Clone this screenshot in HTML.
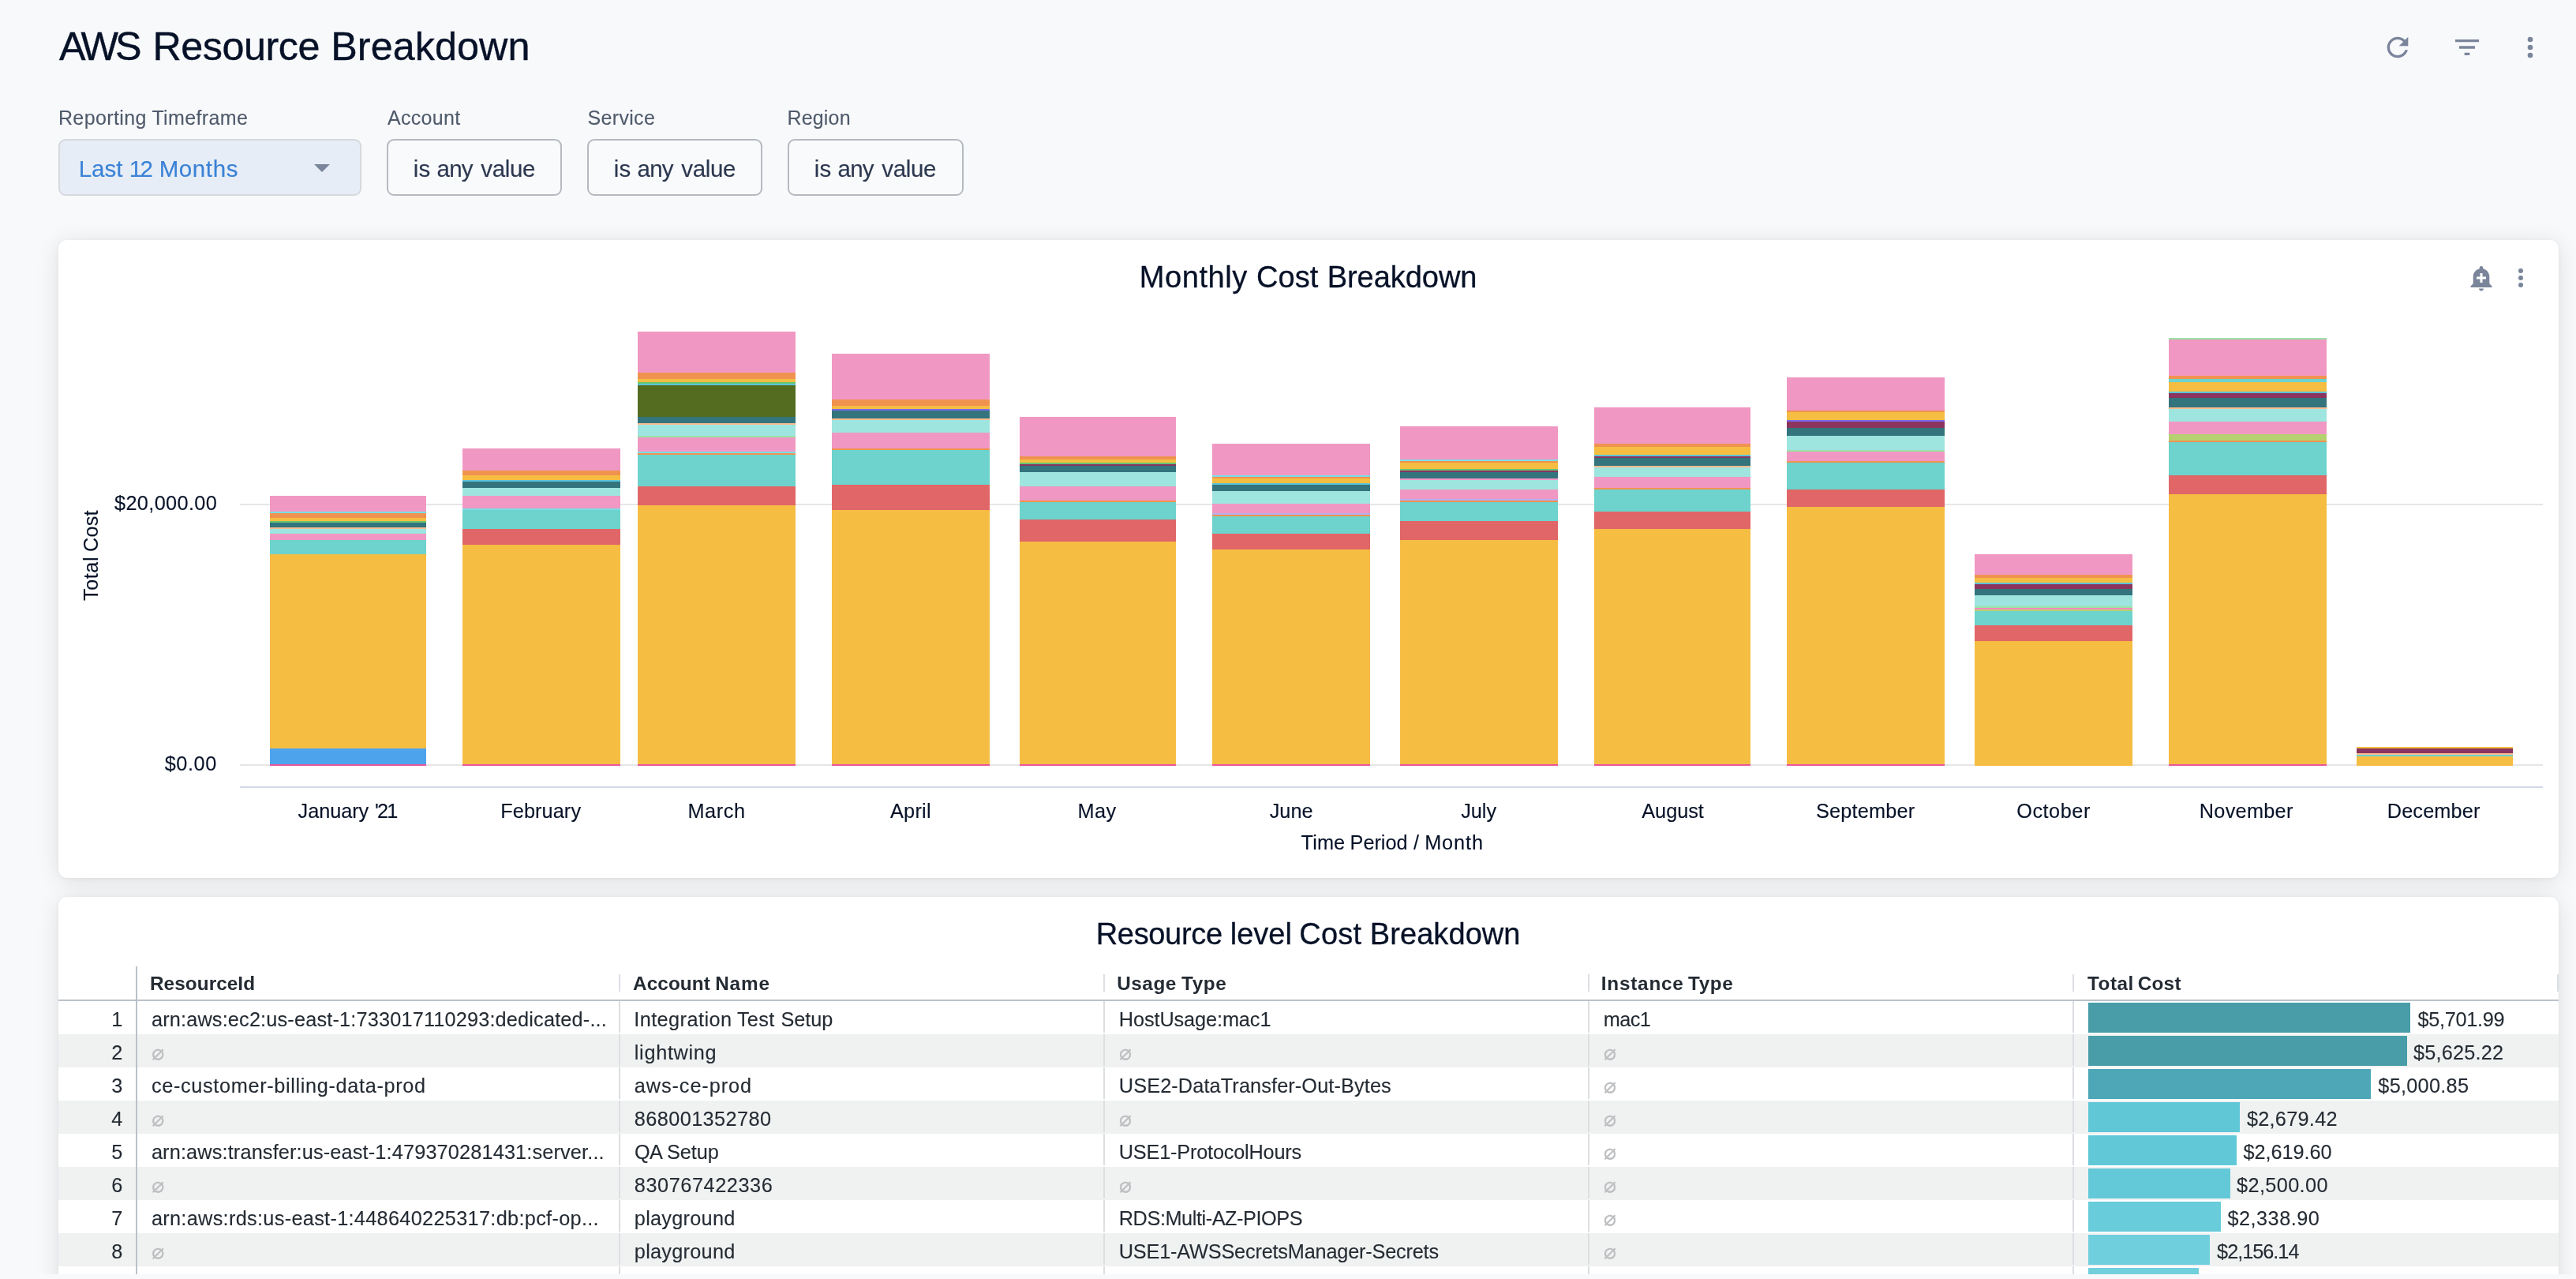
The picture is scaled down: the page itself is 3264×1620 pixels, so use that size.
<!DOCTYPE html>
<html lang="en"><head><meta charset="utf-8"><title>AWS Resource Breakdown</title>
<style>
html,body{margin:0;padding:0;background:#f8f9fb;}
body{width:3264px;height:1620px;overflow:hidden;position:relative;font-family:"Liberation Sans", sans-serif;}
#page{position:absolute;left:0;top:0;width:3264px;height:1614px;overflow:hidden;background:#f8f9fb;}
.abs{position:absolute;}
.t{position:absolute;white-space:nowrap;font-kerning:normal;}
.card{position:absolute;left:74px;width:3168px;background:#fff;border-radius:11px;box-shadow:0 1px 5px rgba(0,0,0,0.05), 0 4px 30px rgba(0,0,0,0.105);}
.dd{position:absolute;left:74px;top:176px;width:384px;height:72px;box-sizing:border-box;border:2px solid #d6d9dd;border-radius:9px;background:#e6edf6;}
.btn{position:absolute;top:176px;width:222px;height:72px;box-sizing:border-box;border:2px solid #b5b9c0;border-radius:9px;background:#f9fafb;}
</style></head><body><div id="page">
<div class="card" style="top:304px;height:808px"></div>
<div class="card" style="top:1136px;height:560px"></div>
<div class="dd"></div>
<div class="btn" style="left:490px"></div>
<div class="btn" style="left:744px"></div>
<div class="btn" style="left:998px;width:223px"></div>
<svg class="abs" style="left:0;top:0" width="3264" height="1130" viewBox="0 0 3264 1130" shape-rendering="crispEdges">
<rect x="304" y="638" width="2918" height="2" fill="#e6e6e6"/>
<rect x="304" y="968" width="2918" height="2" fill="#e6e6e6"/>
<rect x="304" y="996" width="2918" height="2" fill="#d2d9ea"/>
<rect x="342" y="628" width="198" height="20" fill="#f098c3"/>
<rect x="342" y="648" width="198" height="2" fill="#7cdde6"/>
<rect x="342" y="650" width="198" height="6" fill="#f0934f"/>
<rect x="342" y="656" width="198" height="4" fill="#f5bd42"/>
<rect x="342" y="660" width="198" height="2" fill="#66c671"/>
<rect x="342" y="662" width="198" height="6" fill="#33747d"/>
<rect x="342" y="668" width="198" height="2" fill="#f9bb8e"/>
<rect x="342" y="670" width="198" height="6" fill="#9ee5df"/>
<rect x="342" y="676" width="198" height="8" fill="#f098c3"/>
<rect x="342" y="684" width="198" height="18" fill="#6dd3cc"/>
<rect x="342" y="702" width="198" height="246" fill="#f5bd42"/>
<rect x="342" y="948" width="198" height="20" fill="#4ea4ec"/>
<rect x="342" y="968" width="198" height="2" fill="#ea559d"/>
<rect x="586" y="568" width="200" height="28" fill="#f098c3"/>
<rect x="586" y="596" width="200" height="6" fill="#f0934f"/>
<rect x="586" y="602" width="200" height="6" fill="#f5bd42"/>
<rect x="586" y="608" width="200" height="2" fill="#5bc4d9"/>
<rect x="586" y="610" width="200" height="8" fill="#33747d"/>
<rect x="586" y="618" width="200" height="10" fill="#9ee5df"/>
<rect x="586" y="628" width="200" height="16" fill="#f098c3"/>
<rect x="586" y="644" width="200" height="2" fill="#7cdde6"/>
<rect x="586" y="646" width="200" height="24" fill="#6dd3cc"/>
<rect x="586" y="670" width="200" height="20" fill="#e16667"/>
<rect x="586" y="690" width="200" height="278" fill="#f5bd42"/>
<rect x="586" y="968" width="200" height="2" fill="#ea559d"/>
<rect x="808" y="420" width="200" height="52" fill="#f098c3"/>
<rect x="808" y="472" width="200" height="8" fill="#f0934f"/>
<rect x="808" y="480" width="200" height="4" fill="#f5bd42"/>
<rect x="808" y="484" width="200" height="2" fill="#66c671"/>
<rect x="808" y="486" width="200" height="2" fill="#5bc4d9"/>
<rect x="808" y="488" width="200" height="40" fill="#546c1f"/>
<rect x="808" y="528" width="200" height="8" fill="#33747d"/>
<rect x="808" y="536" width="200" height="2" fill="#f9bb8e"/>
<rect x="808" y="538" width="200" height="14" fill="#9ee5df"/>
<rect x="808" y="552" width="200" height="2" fill="#9ae2a6"/>
<rect x="808" y="554" width="200" height="18" fill="#f098c3"/>
<rect x="808" y="572" width="200" height="2" fill="#7cdde6"/>
<rect x="808" y="574" width="200" height="2" fill="#f0934f"/>
<rect x="808" y="576" width="200" height="40" fill="#6dd3cc"/>
<rect x="808" y="616" width="200" height="24" fill="#e16667"/>
<rect x="808" y="640" width="200" height="328" fill="#f5bd42"/>
<rect x="808" y="968" width="200" height="2" fill="#ea559d"/>
<rect x="1054" y="448" width="200" height="58" fill="#f098c3"/>
<rect x="1054" y="506" width="200" height="8" fill="#f0934f"/>
<rect x="1054" y="514" width="200" height="4" fill="#f5bd42"/>
<rect x="1054" y="518" width="200" height="2" fill="#7b6aeb"/>
<rect x="1054" y="520" width="200" height="10" fill="#33747d"/>
<rect x="1054" y="530" width="200" height="2" fill="#f9bb8e"/>
<rect x="1054" y="532" width="200" height="16" fill="#9ee5df"/>
<rect x="1054" y="548" width="200" height="20" fill="#f098c3"/>
<rect x="1054" y="568" width="200" height="2" fill="#f0934f"/>
<rect x="1054" y="570" width="200" height="44" fill="#6dd3cc"/>
<rect x="1054" y="614" width="200" height="32" fill="#e16667"/>
<rect x="1054" y="646" width="200" height="322" fill="#f5bd42"/>
<rect x="1054" y="968" width="200" height="2" fill="#ea559d"/>
<rect x="1292" y="528" width="198" height="50" fill="#f098c3"/>
<rect x="1292" y="578" width="198" height="4" fill="#f0934f"/>
<rect x="1292" y="582" width="198" height="4" fill="#f5bd42"/>
<rect x="1292" y="586" width="198" height="2" fill="#66c671"/>
<rect x="1292" y="588" width="198" height="2" fill="#8a345e"/>
<rect x="1292" y="590" width="198" height="8" fill="#33747d"/>
<rect x="1292" y="598" width="198" height="18" fill="#9ee5df"/>
<rect x="1292" y="616" width="198" height="18" fill="#f098c3"/>
<rect x="1292" y="634" width="198" height="2" fill="#f0934f"/>
<rect x="1292" y="636" width="198" height="22" fill="#6dd3cc"/>
<rect x="1292" y="658" width="198" height="28" fill="#e16667"/>
<rect x="1292" y="686" width="198" height="282" fill="#f5bd42"/>
<rect x="1292" y="968" width="198" height="2" fill="#ea559d"/>
<rect x="1536" y="562" width="200" height="40" fill="#f098c3"/>
<rect x="1536" y="602" width="200" height="2" fill="#7cdde6"/>
<rect x="1536" y="604" width="200" height="2" fill="#f0934f"/>
<rect x="1536" y="606" width="200" height="6" fill="#f5bd42"/>
<rect x="1536" y="612" width="200" height="2" fill="#5bc4d9"/>
<rect x="1536" y="614" width="200" height="8" fill="#33747d"/>
<rect x="1536" y="622" width="200" height="16" fill="#9ee5df"/>
<rect x="1536" y="638" width="200" height="12" fill="#f098c3"/>
<rect x="1536" y="650" width="200" height="2" fill="#b3aef5"/>
<rect x="1536" y="652" width="200" height="2" fill="#f0934f"/>
<rect x="1536" y="654" width="200" height="22" fill="#6dd3cc"/>
<rect x="1536" y="676" width="200" height="20" fill="#e16667"/>
<rect x="1536" y="696" width="200" height="272" fill="#f5bd42"/>
<rect x="1536" y="968" width="200" height="2" fill="#ea559d"/>
<rect x="1774" y="540" width="200" height="42" fill="#f098c3"/>
<rect x="1774" y="582" width="200" height="2" fill="#7cdde6"/>
<rect x="1774" y="584" width="200" height="2" fill="#f0934f"/>
<rect x="1774" y="586" width="200" height="8" fill="#f5bd42"/>
<rect x="1774" y="594" width="200" height="2" fill="#66c671"/>
<rect x="1774" y="596" width="200" height="2" fill="#8a345e"/>
<rect x="1774" y="598" width="200" height="8" fill="#33747d"/>
<rect x="1774" y="606" width="200" height="2" fill="#f098c3"/>
<rect x="1774" y="608" width="200" height="12" fill="#9ee5df"/>
<rect x="1774" y="620" width="200" height="12" fill="#f098c3"/>
<rect x="1774" y="632" width="200" height="2" fill="#b3aef5"/>
<rect x="1774" y="634" width="200" height="2" fill="#f0934f"/>
<rect x="1774" y="636" width="200" height="24" fill="#6dd3cc"/>
<rect x="1774" y="660" width="200" height="24" fill="#e16667"/>
<rect x="1774" y="684" width="200" height="284" fill="#f5bd42"/>
<rect x="1774" y="968" width="200" height="2" fill="#ea559d"/>
<rect x="2020" y="516" width="198" height="46" fill="#f098c3"/>
<rect x="2020" y="562" width="198" height="4" fill="#f0934f"/>
<rect x="2020" y="566" width="198" height="10" fill="#f5bd42"/>
<rect x="2020" y="576" width="198" height="2" fill="#5bc4d9"/>
<rect x="2020" y="578" width="198" height="2" fill="#8a345e"/>
<rect x="2020" y="580" width="198" height="10" fill="#33747d"/>
<rect x="2020" y="590" width="198" height="2" fill="#f9bb8e"/>
<rect x="2020" y="592" width="198" height="12" fill="#9ee5df"/>
<rect x="2020" y="604" width="198" height="14" fill="#f098c3"/>
<rect x="2020" y="618" width="198" height="2" fill="#f0934f"/>
<rect x="2020" y="620" width="198" height="28" fill="#6dd3cc"/>
<rect x="2020" y="648" width="198" height="22" fill="#e16667"/>
<rect x="2020" y="670" width="198" height="298" fill="#f5bd42"/>
<rect x="2020" y="968" width="198" height="2" fill="#ea559d"/>
<rect x="2264" y="478" width="200" height="42" fill="#f098c3"/>
<rect x="2264" y="520" width="200" height="2" fill="#f0934f"/>
<rect x="2264" y="522" width="200" height="10" fill="#f5bd42"/>
<rect x="2264" y="532" width="200" height="2" fill="#7b6aeb"/>
<rect x="2264" y="534" width="200" height="8" fill="#8a345e"/>
<rect x="2264" y="542" width="200" height="10" fill="#33747d"/>
<rect x="2264" y="552" width="200" height="18" fill="#9ee5df"/>
<rect x="2264" y="570" width="200" height="2" fill="#9ae2a6"/>
<rect x="2264" y="572" width="200" height="12" fill="#f098c3"/>
<rect x="2264" y="584" width="200" height="2" fill="#f0934f"/>
<rect x="2264" y="586" width="200" height="34" fill="#6dd3cc"/>
<rect x="2264" y="620" width="200" height="22" fill="#e16667"/>
<rect x="2264" y="642" width="200" height="326" fill="#f5bd42"/>
<rect x="2264" y="968" width="200" height="2" fill="#ea559d"/>
<rect x="2502" y="702" width="200" height="26" fill="#f098c3"/>
<rect x="2502" y="728" width="200" height="4" fill="#f0934f"/>
<rect x="2502" y="732" width="200" height="6" fill="#f5bd42"/>
<rect x="2502" y="738" width="200" height="2" fill="#5bc4d9"/>
<rect x="2502" y="740" width="200" height="6" fill="#8a345e"/>
<rect x="2502" y="746" width="200" height="8" fill="#33747d"/>
<rect x="2502" y="754" width="200" height="14" fill="#9ee5df"/>
<rect x="2502" y="768" width="200" height="2" fill="#9ae2a6"/>
<rect x="2502" y="770" width="200" height="2" fill="#f08cc0"/>
<rect x="2502" y="772" width="200" height="2" fill="#b6d170"/>
<rect x="2502" y="774" width="200" height="18" fill="#6dd3cc"/>
<rect x="2502" y="792" width="200" height="20" fill="#e16667"/>
<rect x="2502" y="812" width="200" height="158" fill="#f5bd42"/>
<rect x="2748" y="428" width="200" height="2" fill="#9ae2a6"/>
<rect x="2748" y="430" width="200" height="46" fill="#f098c3"/>
<rect x="2748" y="476" width="200" height="4" fill="#f0934f"/>
<rect x="2748" y="480" width="200" height="4" fill="#6dd3cc"/>
<rect x="2748" y="484" width="200" height="12" fill="#f5bd42"/>
<rect x="2748" y="496" width="200" height="2" fill="#5bc4d9"/>
<rect x="2748" y="498" width="200" height="6" fill="#8a345e"/>
<rect x="2748" y="504" width="200" height="12" fill="#33747d"/>
<rect x="2748" y="516" width="200" height="2" fill="#f9bb8e"/>
<rect x="2748" y="518" width="200" height="16" fill="#9ee5df"/>
<rect x="2748" y="534" width="200" height="16" fill="#f098c3"/>
<rect x="2748" y="550" width="200" height="8" fill="#b6d170"/>
<rect x="2748" y="558" width="200" height="2" fill="#f0934f"/>
<rect x="2748" y="560" width="200" height="42" fill="#6dd3cc"/>
<rect x="2748" y="602" width="200" height="24" fill="#e16667"/>
<rect x="2748" y="626" width="200" height="342" fill="#f5bd42"/>
<rect x="2748" y="968" width="200" height="2" fill="#ea559d"/>
<rect x="2986" y="946" width="198" height="2" fill="#f5bd42"/>
<rect x="2986" y="948" width="198" height="6" fill="#8a345e"/>
<rect x="2986" y="954" width="198" height="2" fill="#f9bb8e"/>
<rect x="2986" y="956" width="198" height="2" fill="#6dd3cc"/>
<rect x="2986" y="958" width="198" height="12" fill="#f5bd42"/>
</svg>
<div class="abs" style="left:74px;top:1310px;width:3168px;height:42px;background:#f0f2f2"></div>
<div class="abs" style="left:74px;top:1394px;width:3168px;height:42px;background:#f0f2f2"></div>
<div class="abs" style="left:74px;top:1478px;width:3168px;height:42px;background:#f0f2f2"></div>
<div class="abs" style="left:74px;top:1562px;width:3168px;height:42px;background:#f0f2f2"></div>
<div class="abs" style="left:74px;top:1266px;width:3168px;height:2px;background:#bcc2c9"></div>
<div class="abs" style="left:172px;top:1224px;width:2px;height:400px;background:#bbc1c9"></div>
<div class="abs" style="left:784px;top:1234px;width:2px;height:22px;background:#dcdfe3"></div>
<div class="abs" style="left:784px;top:1268px;width:2px;height:40px;background:#dcdee2"></div>
<div class="abs" style="left:784px;top:1310px;width:2px;height:40px;background:#dcdee2"></div>
<div class="abs" style="left:784px;top:1352px;width:2px;height:40px;background:#dcdee2"></div>
<div class="abs" style="left:784px;top:1394px;width:2px;height:40px;background:#dcdee2"></div>
<div class="abs" style="left:784px;top:1436px;width:2px;height:40px;background:#dcdee2"></div>
<div class="abs" style="left:784px;top:1478px;width:2px;height:40px;background:#dcdee2"></div>
<div class="abs" style="left:784px;top:1520px;width:2px;height:40px;background:#dcdee2"></div>
<div class="abs" style="left:784px;top:1562px;width:2px;height:40px;background:#dcdee2"></div>
<div class="abs" style="left:784px;top:1604px;width:2px;height:40px;background:#dcdee2"></div>
<div class="abs" style="left:1398px;top:1234px;width:2px;height:22px;background:#dcdfe3"></div>
<div class="abs" style="left:1398px;top:1268px;width:2px;height:40px;background:#dcdee2"></div>
<div class="abs" style="left:1398px;top:1310px;width:2px;height:40px;background:#dcdee2"></div>
<div class="abs" style="left:1398px;top:1352px;width:2px;height:40px;background:#dcdee2"></div>
<div class="abs" style="left:1398px;top:1394px;width:2px;height:40px;background:#dcdee2"></div>
<div class="abs" style="left:1398px;top:1436px;width:2px;height:40px;background:#dcdee2"></div>
<div class="abs" style="left:1398px;top:1478px;width:2px;height:40px;background:#dcdee2"></div>
<div class="abs" style="left:1398px;top:1520px;width:2px;height:40px;background:#dcdee2"></div>
<div class="abs" style="left:1398px;top:1562px;width:2px;height:40px;background:#dcdee2"></div>
<div class="abs" style="left:1398px;top:1604px;width:2px;height:40px;background:#dcdee2"></div>
<div class="abs" style="left:2012px;top:1234px;width:2px;height:22px;background:#dcdfe3"></div>
<div class="abs" style="left:2012px;top:1268px;width:2px;height:40px;background:#dcdee2"></div>
<div class="abs" style="left:2012px;top:1310px;width:2px;height:40px;background:#dcdee2"></div>
<div class="abs" style="left:2012px;top:1352px;width:2px;height:40px;background:#dcdee2"></div>
<div class="abs" style="left:2012px;top:1394px;width:2px;height:40px;background:#dcdee2"></div>
<div class="abs" style="left:2012px;top:1436px;width:2px;height:40px;background:#dcdee2"></div>
<div class="abs" style="left:2012px;top:1478px;width:2px;height:40px;background:#dcdee2"></div>
<div class="abs" style="left:2012px;top:1520px;width:2px;height:40px;background:#dcdee2"></div>
<div class="abs" style="left:2012px;top:1562px;width:2px;height:40px;background:#dcdee2"></div>
<div class="abs" style="left:2012px;top:1604px;width:2px;height:40px;background:#dcdee2"></div>
<div class="abs" style="left:2626px;top:1234px;width:2px;height:22px;background:#dcdfe3"></div>
<div class="abs" style="left:2626px;top:1268px;width:2px;height:40px;background:#dcdee2"></div>
<div class="abs" style="left:2626px;top:1310px;width:2px;height:40px;background:#dcdee2"></div>
<div class="abs" style="left:2626px;top:1352px;width:2px;height:40px;background:#dcdee2"></div>
<div class="abs" style="left:2626px;top:1394px;width:2px;height:40px;background:#dcdee2"></div>
<div class="abs" style="left:2626px;top:1436px;width:2px;height:40px;background:#dcdee2"></div>
<div class="abs" style="left:2626px;top:1478px;width:2px;height:40px;background:#dcdee2"></div>
<div class="abs" style="left:2626px;top:1520px;width:2px;height:40px;background:#dcdee2"></div>
<div class="abs" style="left:2626px;top:1562px;width:2px;height:40px;background:#dcdee2"></div>
<div class="abs" style="left:2626px;top:1604px;width:2px;height:40px;background:#dcdee2"></div>
<div class="abs" style="left:3240px;top:1234px;width:2px;height:22px;background:#dcdfe3"></div>
<div class="abs" style="left:2646px;top:1270px;width:408px;height:38px;background:#489da9"></div>
<div class="abs" style="left:2646px;top:1312px;width:404px;height:38px;background:#489da9"></div>
<div class="abs" style="left:2646px;top:1354px;width:358px;height:38px;background:#4da7b6"></div>
<div class="abs" style="left:2646px;top:1396px;width:192px;height:38px;background:#5fc7d6"></div>
<div class="abs" style="left:2646px;top:1438px;width:188px;height:38px;background:#60c8d7"></div>
<div class="abs" style="left:2646px;top:1480px;width:180px;height:38px;background:#63c9d8"></div>
<div class="abs" style="left:2646px;top:1522px;width:168px;height:38px;background:#68ccda"></div>
<div class="abs" style="left:2646px;top:1564px;width:154px;height:38px;background:#6fcfdc"></div>
<div class="abs" style="left:2646px;top:1606px;width:140px;height:38px;background:#72d0dd"></div>
<svg class="abs" style="left:3018px;top:40px" width="40" height="40" viewBox="0 0 24 24" fill="#7a859b"><path d="M17.65 6.35C16.2 4.9 14.21 4 12 4c-4.42 0-7.99 3.58-7.99 8s3.57 8 7.99 8c3.73 0 6.84-2.55 7.73-6h-2.08c-.82 2.33-3.04 4-5.65 4-3.31 0-6-2.69-6-6s2.69-6 6-6c1.66 0 3.14.69 4.22 1.78L13 11h7V4l-2.35 2.35z"/></svg>
<svg class="abs" style="left:3106px;top:40px" width="40" height="40" viewBox="0 0 24 24" fill="#7a859b"><path d="M10 18h4v-2h-4v2zM3 6v2h18V6H3zm3 7h12v-2H6v2z"/></svg>
<svg class="abs" style="left:3186px;top:40px" width="40" height="40" viewBox="0 0 24 24" fill="#7a859b"><circle cx="12" cy="6" r="2"/><circle cx="12" cy="12" r="2"/><circle cx="12" cy="18" r="2"/></svg>
<svg class="abs" style="left:3125.5px;top:334px" width="36" height="36" viewBox="0 0 24 24" fill="#7a859b"><path d="M10.01 21.01c0 1.1.89 1.99 1.99 1.99s1.99-.89 1.99-1.99h-3.98zm8.87-4.19V11c0-3.25-2.25-5.97-5.29-6.69v-.72C13.59 2.71 12.88 2 12 2s-1.59.71-1.59 1.59v.72C7.37 5.03 5.12 7.75 5.12 11v5.82L3 18.94V20h18v-1.060l-2.12-2.12zM16 13.01h-3v3h-2v-3H8V11h3V8h2v3h3v2.01z"/></svg>
<svg class="abs" style="left:3176px;top:334px" width="36" height="36" viewBox="0 0 24 24" fill="#7a859b"><circle cx="12" cy="6" r="2"/><circle cx="12" cy="12" r="2"/><circle cx="12" cy="18" r="2"/></svg>
<svg class="abs" style="left:398px;top:208px" width="20" height="10" viewBox="0 0 20 10" fill="#7a859b"><path d="M0 0h20L10 10z"/></svg>
<div id="txt" style="position:absolute;left:0;top:0;width:3264px;height:1614px;will-change:transform">
<div class="t" style="font-size:50.3px;line-height:50.3px;color:#071228;-webkit-text-stroke:0.4px;left:74.90px;top:34.000px;"><span style="letter-spacing:-4.048px;margin-left:0.000px">AWS</span> <span style="letter-spacing:-0.472px;margin-left:4.031px">Resource</span> <span style="letter-spacing:0.076px;margin-left:0.329px">Breakdown</span></div>
<div class="t" style="font-size:25px;line-height:25px;color:#4f5a6b;-webkit-text-stroke:0.12px;left:73.90px;top:137.000px;"><span style="letter-spacing:0.401px;margin-left:0.000px">Reporting</span> <span style="letter-spacing:0.359px;margin-left:-0.450px">Timeframe</span></div>
<div class="t" style="font-size:25px;line-height:25px;color:#4f5a6b;-webkit-text-stroke:0.12px;letter-spacing:0.302px;left:491.00px;top:137.000px;">Account</div>
<div class="t" style="font-size:25px;line-height:25px;color:#4f5a6b;-webkit-text-stroke:0.12px;letter-spacing:0.324px;left:744.50px;top:137.000px;">Service</div>
<div class="t" style="font-size:25px;line-height:25px;color:#4f5a6b;-webkit-text-stroke:0.12px;letter-spacing:0.196px;left:997.40px;top:137.000px;">Region</div>
<div class="t" style="font-size:29.5px;line-height:29.5px;color:#3b82d6;-webkit-text-stroke:0.18px;left:99.70px;top:199.000px;"><span style="letter-spacing:-0.018px;margin-left:0.000px">Last</span> <span style="letter-spacing:-2.774px;margin-left:0.179px">12</span> <span style="letter-spacing:0.597px;margin-left:2.477px">Months</span></div>
<div class="t" style="font-size:29.5px;line-height:29.5px;color:#2c3850;-webkit-text-stroke:0.18px;left:523.66px;top:199.000px;"><span style="letter-spacing:0.362px;margin-left:0.000px">is</span> <span style="letter-spacing:-0.771px;margin-left:-0.301px">any</span> <span style="letter-spacing:-0.332px;margin-left:2.275px">value</span></div>
<div class="t" style="font-size:29.5px;line-height:29.5px;color:#2c3850;-webkit-text-stroke:0.18px;left:777.66px;top:199.000px;"><span style="letter-spacing:0.362px;margin-left:0.000px">is</span> <span style="letter-spacing:-0.771px;margin-left:-0.301px">any</span> <span style="letter-spacing:-0.332px;margin-left:2.275px">value</span></div>
<div class="t" style="font-size:29.5px;line-height:29.5px;color:#2c3850;-webkit-text-stroke:0.18px;left:1031.66px;top:199.000px;"><span style="letter-spacing:0.362px;margin-left:0.000px">is</span> <span style="letter-spacing:-0.771px;margin-left:-0.301px">any</span> <span style="letter-spacing:-0.332px;margin-left:2.275px">value</span></div>
<div class="t" style="font-size:38px;line-height:38px;color:#071228;-webkit-text-stroke:0.3px;left:1443.83px;top:332.000px;"><span style="letter-spacing:0.569px;margin-left:0.000px">Monthly</span> <span style="letter-spacing:0.073px;margin-left:0.592px">Cost</span> <span style="letter-spacing:-0.039px;margin-left:0.631px">Breakdown</span></div>
<div class="t" style="font-size:25.3px;line-height:25.3px;color:#071228;-webkit-text-stroke:0.12px;letter-spacing:0.361px;left:145.00px;top:625.000px;">$20,000.00</div>
<div class="t" style="font-size:25.3px;line-height:25.3px;color:#071228;-webkit-text-stroke:0.12px;letter-spacing:0.590px;left:208.70px;top:955.000px;">$0.00</div>
<div class="t" style="font-size:25.3px;line-height:25.3px;color:#071228;-webkit-text-stroke:0.12px;left:377.60px;top:1015.000px;"><span style="letter-spacing:-0.076px;margin-left:0.000px">January</span> <span style="letter-spacing:-1.800px;margin-left:0.797px">'21</span></div>
<div class="t" style="font-size:25.3px;line-height:25.3px;color:#071228;-webkit-text-stroke:0.12px;letter-spacing:0.088px;left:634.20px;top:1015.000px;">February</div>
<div class="t" style="font-size:25.3px;line-height:25.3px;color:#071228;-webkit-text-stroke:0.12px;letter-spacing:0.595px;left:871.40px;top:1015.000px;">March</div>
<div class="t" style="font-size:25.3px;line-height:25.3px;color:#071228;-webkit-text-stroke:0.12px;letter-spacing:0.252px;left:1128.00px;top:1015.000px;">April</div>
<div class="t" style="font-size:25.3px;line-height:25.3px;color:#071228;-webkit-text-stroke:0.12px;letter-spacing:0.377px;left:1365.50px;top:1015.000px;">May</div>
<div class="t" style="font-size:25.3px;line-height:25.3px;color:#071228;-webkit-text-stroke:0.12px;letter-spacing:0.036px;left:1608.70px;top:1015.000px;">June</div>
<div class="t" style="font-size:25.3px;line-height:25.3px;color:#071228;-webkit-text-stroke:0.12px;letter-spacing:-0.081px;left:1851.30px;top:1015.000px;">July</div>
<div class="t" style="font-size:25.3px;line-height:25.3px;color:#071228;-webkit-text-stroke:0.12px;letter-spacing:-0.047px;left:2080.30px;top:1015.000px;">August</div>
<div class="t" style="font-size:25.3px;line-height:25.3px;color:#071228;-webkit-text-stroke:0.12px;letter-spacing:0.196px;left:2300.90px;top:1015.000px;">September</div>
<div class="t" style="font-size:25.3px;line-height:25.3px;color:#071228;-webkit-text-stroke:0.12px;letter-spacing:0.522px;left:2555.20px;top:1015.000px;">October</div>
<div class="t" style="font-size:25.3px;line-height:25.3px;color:#071228;-webkit-text-stroke:0.12px;letter-spacing:0.260px;left:2786.80px;top:1015.000px;">November</div>
<div class="t" style="font-size:25.3px;line-height:25.3px;color:#071228;-webkit-text-stroke:0.12px;letter-spacing:0.117px;left:3024.80px;top:1015.000px;">December</div>
<div class="t" style="font-size:25.3px;line-height:25.3px;color:#071228;-webkit-text-stroke:0.12px;left:1648.60px;top:1055.000px;"><span style="letter-spacing:0.096px;margin-left:0.000px">Time</span> <span style="letter-spacing:-0.012px;margin-left:-0.796px">Period</span> <span style="letter-spacing:0.000px;margin-left:0.513px">/</span> <span style="letter-spacing:0.889px;margin-left:-0.058px">Month</span></div>
<div class="t" style="font-size:25.3px;line-height:25.3px;color:#071228;-webkit-text-stroke:0.12px;left:124.00px;top:761.40px;transform-origin:0 0;transform:rotate(-90deg) translate(0,-21.00px);"><span style="letter-spacing:0.520px;margin-left:0.000px">Total</span> <span style="letter-spacing:0.136px;margin-left:-0.970px">Cost</span></div>
<div class="t" style="font-size:38px;line-height:38px;color:#071228;-webkit-text-stroke:0.3px;left:1388.73px;top:1164.000px;"><span style="letter-spacing:-0.332px;margin-left:0.000px">Resource</span> <span style="letter-spacing:0.007px;margin-left:-0.541px">level</span> <span style="letter-spacing:0.173px;margin-left:-1.151px">Cost</span> <span style="letter-spacing:0.061px;margin-left:0.131px">Breakdown</span></div>
<div class="t" style="font-size:24.3px;line-height:24.3px;color:#242b33;font-weight:700;letter-spacing:0.078px;left:190.00px;top:1234.000px;">ResourceId</div>
<div class="t" style="font-size:24.3px;line-height:24.3px;color:#242b33;font-weight:700;left:802.00px;top:1234.000px;"><span style="letter-spacing:0.115px;margin-left:0.000px">Account</span> <span style="letter-spacing:0.843px;margin-left:-0.559px">Name</span></div>
<div class="t" style="font-size:24.3px;line-height:24.3px;color:#242b33;font-weight:700;left:1415.20px;top:1234.000px;"><span style="letter-spacing:0.545px;margin-left:0.000px">Usage</span> <span style="letter-spacing:0.601px;margin-left:-0.511px">Type</span></div>
<div class="t" style="font-size:24.3px;line-height:24.3px;color:#242b33;font-weight:700;left:2028.80px;top:1234.000px;"><span style="letter-spacing:0.775px;margin-left:0.000px">Instance</span> <span style="letter-spacing:0.567px;margin-left:-1.241px">Type</span></div>
<div class="t" style="font-size:24.3px;line-height:24.3px;color:#242b33;font-weight:700;left:2645.00px;top:1234.000px;"><span style="letter-spacing:0.528px;margin-left:0.000px">Total</span> <span style="letter-spacing:0.298px;margin-left:-2.030px">Cost</span></div>
<div class="t" style="font-size:25.3px;line-height:25.3px;color:#242b33;-webkit-text-stroke:0.12px;left:141.33px;top:1279.000px;">1</div>
<div class="t" style="font-size:25.3px;line-height:25.3px;color:#242b33;-webkit-text-stroke:0.12px;letter-spacing:0.167px;left:191.90px;top:1279.000px;">arn:aws:ec2:us-east-1:733017110293:dedicated-...</div>
<div class="t" style="font-size:25.3px;line-height:25.3px;color:#242b33;-webkit-text-stroke:0.12px;left:803.20px;top:1279.000px;"><span style="letter-spacing:0.431px;margin-left:0.000px">Integration</span> <span style="letter-spacing:0.310px;margin-left:-0.631px">Test</span> <span style="letter-spacing:-0.036px;margin-left:0.832px">Setup</span></div>
<div class="t" style="font-size:25.3px;line-height:25.3px;color:#242b33;-webkit-text-stroke:0.12px;letter-spacing:-0.106px;left:1417.80px;top:1279.000px;">HostUsage:mac1</div>
<div class="t" style="font-size:25.3px;line-height:25.3px;color:#242b33;-webkit-text-stroke:0.12px;letter-spacing:-0.599px;left:2031.80px;top:1279.000px;">mac1</div>
<div class="t" style="font-size:25.3px;line-height:25.3px;color:#242b33;-webkit-text-stroke:0.12px;letter-spacing:-0.298px;left:3063.40px;top:1279.000px;">$5,701.99</div>
<div class="t" style="font-size:25.3px;line-height:25.3px;color:#242b33;-webkit-text-stroke:0.12px;left:141.33px;top:1321.000px;">2</div>
<div class="t" style="font-size:26.5px;line-height:26.5px;color:#bcbec0;font-family:'DejaVu Sans Mono',monospace;-webkit-text-stroke:0.35px;left:192.17px;top:1322.200px;">∅</div>
<div class="t" style="font-size:25.3px;line-height:25.3px;color:#242b33;-webkit-text-stroke:0.12px;letter-spacing:0.678px;left:803.80px;top:1321.000px;">lightwing</div>
<div class="t" style="font-size:26.5px;line-height:26.5px;color:#bcbec0;font-family:'DejaVu Sans Mono',monospace;-webkit-text-stroke:0.35px;left:1418.07px;top:1322.200px;">∅</div>
<div class="t" style="font-size:26.5px;line-height:26.5px;color:#bcbec0;font-family:'DejaVu Sans Mono',monospace;-webkit-text-stroke:0.35px;left:2032.07px;top:1322.200px;">∅</div>
<div class="t" style="font-size:25.3px;line-height:25.3px;color:#242b33;-webkit-text-stroke:0.12px;letter-spacing:0.190px;left:3058.00px;top:1321.000px;">$5,625.22</div>
<div class="t" style="font-size:25.3px;line-height:25.3px;color:#242b33;-webkit-text-stroke:0.12px;left:141.33px;top:1363.000px;">3</div>
<div class="t" style="font-size:25.3px;line-height:25.3px;color:#242b33;-webkit-text-stroke:0.12px;letter-spacing:0.651px;left:191.90px;top:1363.000px;">ce-customer-billing-data-prod</div>
<div class="t" style="font-size:25.3px;line-height:25.3px;color:#242b33;-webkit-text-stroke:0.12px;letter-spacing:0.907px;left:803.80px;top:1363.000px;">aws-ce-prod</div>
<div class="t" style="font-size:25.3px;line-height:25.3px;color:#242b33;-webkit-text-stroke:0.12px;letter-spacing:0.109px;left:1417.80px;top:1363.000px;">USE2-DataTransfer-Out-Bytes</div>
<div class="t" style="font-size:26.5px;line-height:26.5px;color:#bcbec0;font-family:'DejaVu Sans Mono',monospace;-webkit-text-stroke:0.35px;left:2032.07px;top:1364.200px;">∅</div>
<div class="t" style="font-size:25.3px;line-height:25.3px;color:#242b33;-webkit-text-stroke:0.12px;letter-spacing:0.265px;left:3013.30px;top:1363.000px;">$5,000.85</div>
<div class="t" style="font-size:25.3px;line-height:25.3px;color:#242b33;-webkit-text-stroke:0.12px;left:141.33px;top:1405.000px;">4</div>
<div class="t" style="font-size:26.5px;line-height:26.5px;color:#bcbec0;font-family:'DejaVu Sans Mono',monospace;-webkit-text-stroke:0.35px;left:192.17px;top:1406.200px;">∅</div>
<div class="t" style="font-size:25.3px;line-height:25.3px;color:#242b33;-webkit-text-stroke:0.12px;letter-spacing:0.402px;left:803.80px;top:1405.000px;">868001352780</div>
<div class="t" style="font-size:26.5px;line-height:26.5px;color:#bcbec0;font-family:'DejaVu Sans Mono',monospace;-webkit-text-stroke:0.35px;left:1418.07px;top:1406.200px;">∅</div>
<div class="t" style="font-size:26.5px;line-height:26.5px;color:#bcbec0;font-family:'DejaVu Sans Mono',monospace;-webkit-text-stroke:0.35px;left:2032.07px;top:1406.200px;">∅</div>
<div class="t" style="font-size:25.3px;line-height:25.3px;color:#242b33;-webkit-text-stroke:0.12px;letter-spacing:0.265px;left:2846.90px;top:1405.000px;">$2,679.42</div>
<div class="t" style="font-size:25.3px;line-height:25.3px;color:#242b33;-webkit-text-stroke:0.12px;left:141.33px;top:1447.000px;">5</div>
<div class="t" style="font-size:25.3px;line-height:25.3px;color:#242b33;-webkit-text-stroke:0.12px;letter-spacing:0.147px;left:191.90px;top:1447.000px;">arn:aws:transfer:us-east-1:479370281431:server...</div>
<div class="t" style="font-size:25.3px;line-height:25.3px;color:#242b33;-webkit-text-stroke:0.12px;left:803.95px;top:1447.000px;"><span style="letter-spacing:-0.729px;margin-left:0.000px">QA</span> <span style="letter-spacing:-0.049px;margin-left:-1.075px">Setup</span></div>
<div class="t" style="font-size:25.3px;line-height:25.3px;color:#242b33;-webkit-text-stroke:0.12px;letter-spacing:-0.198px;left:1417.80px;top:1447.000px;">USE1-ProtocolHours</div>
<div class="t" style="font-size:26.5px;line-height:26.5px;color:#bcbec0;font-family:'DejaVu Sans Mono',monospace;-webkit-text-stroke:0.35px;left:2032.07px;top:1448.200px;">∅</div>
<div class="t" style="font-size:25.3px;line-height:25.3px;color:#242b33;-webkit-text-stroke:0.12px;letter-spacing:-0.073px;left:2842.50px;top:1447.000px;">$2,619.60</div>
<div class="t" style="font-size:25.3px;line-height:25.3px;color:#242b33;-webkit-text-stroke:0.12px;left:141.33px;top:1489.000px;">6</div>
<div class="t" style="font-size:26.5px;line-height:26.5px;color:#bcbec0;font-family:'DejaVu Sans Mono',monospace;-webkit-text-stroke:0.35px;left:192.17px;top:1490.200px;">∅</div>
<div class="t" style="font-size:25.3px;line-height:25.3px;color:#242b33;-webkit-text-stroke:0.12px;letter-spacing:0.557px;left:803.80px;top:1489.000px;">830767422336</div>
<div class="t" style="font-size:26.5px;line-height:26.5px;color:#bcbec0;font-family:'DejaVu Sans Mono',monospace;-webkit-text-stroke:0.35px;left:1418.07px;top:1490.200px;">∅</div>
<div class="t" style="font-size:26.5px;line-height:26.5px;color:#bcbec0;font-family:'DejaVu Sans Mono',monospace;-webkit-text-stroke:0.35px;left:2032.07px;top:1490.200px;">∅</div>
<div class="t" style="font-size:25.3px;line-height:25.3px;color:#242b33;-webkit-text-stroke:0.12px;letter-spacing:0.352px;left:2834.10px;top:1489.000px;">$2,500.00</div>
<div class="t" style="font-size:25.3px;line-height:25.3px;color:#242b33;-webkit-text-stroke:0.12px;left:141.33px;top:1531.000px;">7</div>
<div class="t" style="font-size:25.3px;line-height:25.3px;color:#242b33;-webkit-text-stroke:0.12px;letter-spacing:0.306px;left:191.90px;top:1531.000px;">arn:aws:rds:us-east-1:448640225317:db:pcf-op...</div>
<div class="t" style="font-size:25.3px;line-height:25.3px;color:#242b33;-webkit-text-stroke:0.12px;letter-spacing:0.264px;left:803.80px;top:1531.000px;">playground</div>
<div class="t" style="font-size:25.3px;line-height:25.3px;color:#242b33;-webkit-text-stroke:0.12px;letter-spacing:-0.441px;left:1417.80px;top:1531.000px;">RDS:Multi-AZ-PIOPS</div>
<div class="t" style="font-size:26.5px;line-height:26.5px;color:#bcbec0;font-family:'DejaVu Sans Mono',monospace;-webkit-text-stroke:0.35px;left:2032.07px;top:1532.200px;">∅</div>
<div class="t" style="font-size:25.3px;line-height:25.3px;color:#242b33;-webkit-text-stroke:0.12px;letter-spacing:0.465px;left:2822.50px;top:1531.000px;">$2,338.90</div>
<div class="t" style="font-size:25.3px;line-height:25.3px;color:#242b33;-webkit-text-stroke:0.12px;left:141.33px;top:1573.000px;">8</div>
<div class="t" style="font-size:26.5px;line-height:26.5px;color:#bcbec0;font-family:'DejaVu Sans Mono',monospace;-webkit-text-stroke:0.35px;left:192.17px;top:1574.200px;">∅</div>
<div class="t" style="font-size:25.3px;line-height:25.3px;color:#242b33;-webkit-text-stroke:0.12px;letter-spacing:0.264px;left:803.80px;top:1573.000px;">playground</div>
<div class="t" style="font-size:25.3px;line-height:25.3px;color:#242b33;-webkit-text-stroke:0.12px;letter-spacing:-0.196px;left:1417.80px;top:1573.000px;">USE1-AWSSecretsManager-Secrets</div>
<div class="t" style="font-size:26.5px;line-height:26.5px;color:#bcbec0;font-family:'DejaVu Sans Mono',monospace;-webkit-text-stroke:0.35px;left:2032.07px;top:1574.200px;">∅</div>
<div class="t" style="font-size:25.3px;line-height:25.3px;color:#242b33;-webkit-text-stroke:0.12px;letter-spacing:-1.023px;left:2809.10px;top:1573.000px;">$2,156.14</div>
</div>
</div></body></html>
